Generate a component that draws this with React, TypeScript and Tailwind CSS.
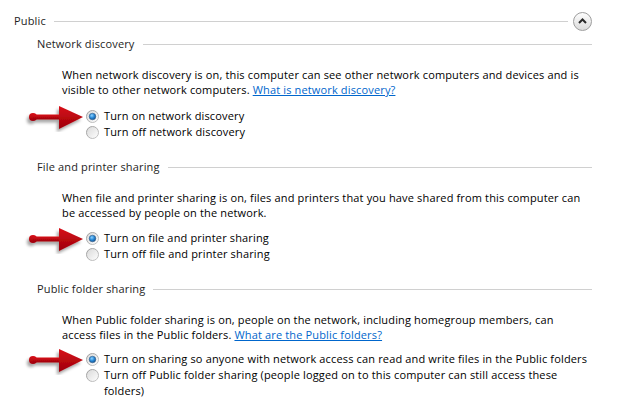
import type { ReactNode } from "react";

function Radio({ checked }: { checked?: boolean }) {
  return (
    <svg width="13" height="13" viewBox="0 0 13 13" className="shrink-0">
      <defs>
        <linearGradient id="ring" x1="0" y1="0" x2="1" y2="1">
          <stop offset="0" stopColor="#9a9a9a" />
          <stop offset="1" stopColor="#c8c8c8" />
        </linearGradient>
        <linearGradient id="fill" x1="0" y1="0" x2="1" y2="1">
          <stop offset="0" stopColor="#d8d8d8" />
          <stop offset="1" stopColor="#ffffff" />
        </linearGradient>
        <radialGradient id="dot" cx="0.4" cy="0.35" r="0.7">
          <stop offset="0" stopColor="#8fd3ff" />
          <stop offset="0.5" stopColor="#2a8ad8" />
          <stop offset="1" stopColor="#0b4c8c" />
        </radialGradient>
      </defs>
      <circle cx="6.5" cy="6.5" r="6" fill="url(#fill)" stroke="url(#ring)" strokeWidth="1" />
      {checked && <circle cx="6.5" cy="6.5" r="3.3" fill="url(#dot)" stroke="#3a5f86" strokeWidth="0.6" />}
    </svg>
  );
}

function Arrow() {
  return (
    <svg width="62" height="28" viewBox="0 0 62 28" className="absolute left-[-62px] top-[-6px]">
      <defs>
        <linearGradient id="red" x1="0" y1="0" x2="0" y2="1">
          <stop offset="0" stopColor="#d8101a" />
          <stop offset="1" stopColor="#9c0008" />
        </linearGradient>
        <filter id="sh" x="-20%" y="-40%" width="150%" height="190%">
          <feDropShadow dx="-2" dy="3" stdDeviation="1.6" floodColor="#000" floodOpacity="0.35" />
        </filter>
      </defs>
      <g filter="url(#sh)">
        <circle cx="9" cy="13" r="4" fill="url(#red)" />
        <rect x="9" y="10.5" width="30" height="5" fill="url(#red)" />
        <path d="M35 2 L59 13 L35 25 Z" fill="url(#red)" />
      </g>
    </svg>
  );
}

function Header({ children }: { children: ReactNode }) {
  return (
    <div className="flex items-center h-[18px] pl-[37px] pr-[44px]">
      <span className="text-[#1e1e1e]">{children}</span>
      <div className="flex-1 ml-[8px] h-px bg-[#d0d0d0]" />
    </div>
  );
}

function Option({ checked, arrow, children }: { checked?: boolean; arrow?: boolean; children: ReactNode }) {
  return (
    <div className="flex items-start gap-[5px] leading-[16px]">
      <div className="relative mt-[1.5px]">
        {arrow && <Arrow />}
        <Radio checked={checked} />
      </div>
      <span>{children}</span>
    </div>
  );
}

function Link({ children }: { children: ReactNode }) {
  return <span className="text-[#0066cc] underline">{children}</span>;
}

export default function App() {
  return (
    <div
      className="w-[636px] h-[404px] bg-white text-[11px] tracking-[0.15px] text-black overflow-hidden pt-[12px]"
      style={{ fontFamily: '"Open Sans", "Noto Sans", sans-serif' }}
    >
      <div className="flex items-center h-[18px] pl-[14px] pr-[44px]">
        <span className="text-[#1e1e1e]">Public</span>
        <div className="flex-1 ml-[8px] h-px bg-[#d0d0d0]" />
        <div className="ml-[5px] w-[19px] h-[19px] rounded-full border border-[#9e9e9e] bg-gradient-to-b from-[#fdfdfd] to-[#dcdcdc] flex items-center justify-center">
          <svg width="9" height="6" viewBox="0 0 9 6">
            <path d="M1 5 L4.5 1.5 L8 5" fill="none" stroke="#2a2a2a" strokeWidth="2" />
          </svg>
        </div>
      </div>

      <div className="mt-[5px]">
        <Header>Network discovery</Header>
      </div>
      <div className="mt-[14px] pl-[62px] leading-[15px] whitespace-nowrap">
        <div>When network discovery is on, this computer can see other network computers and devices and is</div>
        <div>
          visible to other network computers. <Link>What is network discovery?</Link>
        </div>
      </div>
      <div className="mt-[11px] pl-[86px] whitespace-nowrap">
        <Option checked arrow>Turn on network discovery</Option>
        <Option>Turn off network discovery</Option>
      </div>

      <div className="mt-[18px]">
        <Header>File and printer sharing</Header>
      </div>
      <div className="mt-[14px] pl-[62px] leading-[15px] whitespace-nowrap">
        <div>When file and printer sharing is on, files and printers that you have shared from this computer can</div>
        <div>be accessed by people on the network.</div>
      </div>
      <div className="mt-[10px] pl-[86px] whitespace-nowrap">
        <Option checked arrow>Turn on file and printer sharing</Option>
        <Option>Turn off file and printer sharing</Option>
      </div>

      <div className="mt-[18px]">
        <Header>Public folder sharing</Header>
      </div>
      <div className="mt-[14px] pl-[62px] leading-[15px] whitespace-nowrap">
        <div>When Public folder sharing is on, people on the network, including homegroup members, can</div>
        <div>
          access files in the Public folders. <Link>What are the Public folders?</Link>
        </div>
      </div>
      <div className="mt-[9px] pl-[86px] whitespace-nowrap">
        <Option checked arrow>Turn on sharing so anyone with network access can read and write files in the Public folders</Option>
        <Option>
          Turn off Public folder sharing (people logged on to this computer can still access these
          <br />
          folders)
        </Option>
      </div>
    </div>
  );
}
